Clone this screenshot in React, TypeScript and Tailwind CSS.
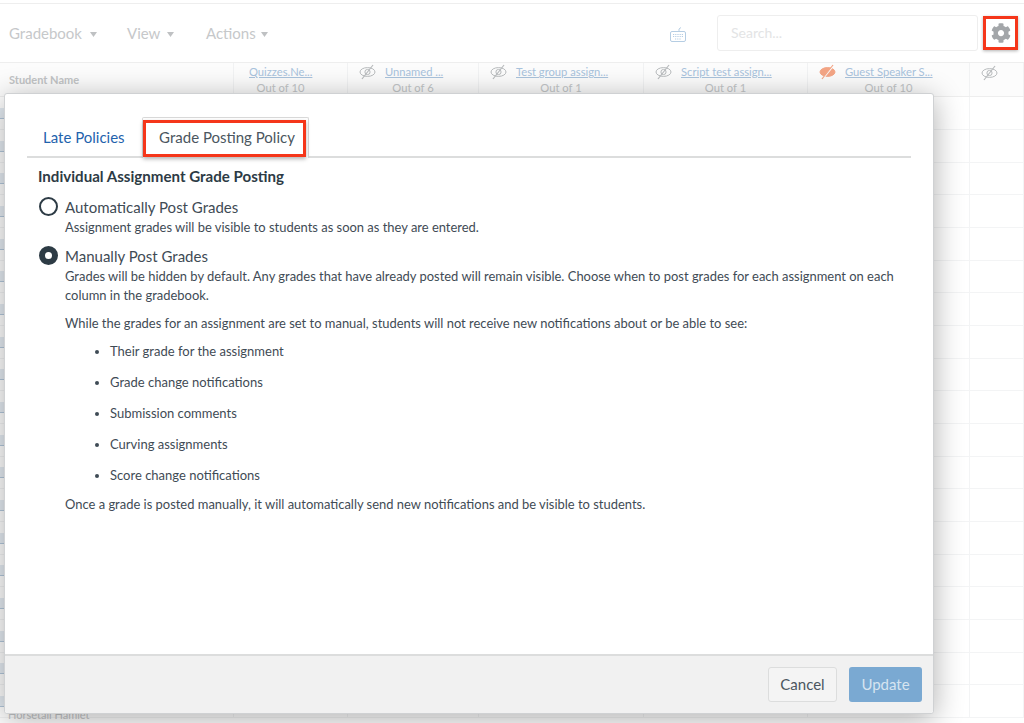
import { FaCog } from "react-icons/fa";

const cols = ["w-[234px]", "w-[114px]", "w-[131px]", "w-[165px]", "w-[164px]", "w-[162px]", "flex-1"];

function EyeOff({ color = "#9aa0a3", fill = false }: { color?: string; fill?: boolean }) {
  return (
    <svg width="17" height="16" viewBox="0 0 17 16" fill="none" className="shrink-0">
      <ellipse cx="8.5" cy="8" rx="7.5" ry="4.4" stroke={color} strokeWidth="1" fill={fill ? color : "none"} />
      {!fill && <circle cx="8.5" cy="8" r="2.6" stroke={color} strokeWidth="1" />}
      {fill && <path d="M4.5 14 L15 1" stroke="#fcfcfc" strokeWidth="1.4" />}
      <path d="M3 15 L14 1" stroke={color} strokeWidth="1.2" />
    </svg>
  );
}

function Caret() {
  return (
    <svg width="7" height="5" viewBox="0 0 7 5" className="mt-[2px]">
      <path d="M0 0 H7 L3.5 5 Z" fill="#bfc1c3" />
    </svg>
  );
}

function Head({ title, out, eye, w, orange, first }: { title?: string; out?: string; eye?: boolean; w: string; orange?: boolean; first?: boolean }) {
  return (
    <div className={`${w} h-full border-r border-[#f1f2f3] flex flex-col pt-[1px] text-[11.2px] leading-[16px]`}>
      <div className={`flex items-center gap-[9px] h-[18px] ${first ? "pl-[15px]" : "pl-[11px]"}`}>
        {eye && <EyeOff color={orange ? "#f4a585" : "#b8bbbd"} fill={orange} />}
        {title && <span className="text-[#a9c3dd] underline whitespace-nowrap">{title}</span>}
      </div>
      {out && <div className={`text-[#c3c6c8] text-center ${first ? "pr-[20px]" : ""}`}>{out}</div>}
    </div>
  );
}

function Row({ h }: { h: string }) {
  return (
    <div className={`${h} flex border-b border-[#f3f4f5]`}>
      {cols.map((c, i) => (
        <div key={i} className={`${c} border-r border-[#f3f4f5] flex items-center overflow-hidden`}>
          {i === 0 && <div className="w-[4px] h-[11px] bg-[#e6edf4] border-b border-[#b4c8dc]" />}
        </div>
      ))}
    </div>
  );
}

const rows = [
  "h-[33px]", "h-[33px]", "h-[32px]", "h-[33px]", "h-[33px]", "h-[32px]", "h-[33px]", "h-[33px]", "h-[32px]",
  "h-[33px]", "h-[33px]", "h-[32px]", "h-[33px]", "h-[33px]", "h-[32px]", "h-[33px]", "h-[33px]", "h-[32px]",
  "h-[33px]",
];

const items = [
  "Their grade for the assignment",
  "Grade change notifications",
  "Submission comments",
  "Curving assignments",
  "Score change notifications",
];

export default function App() {
  return (
    <div className="relative w-[1024px] h-[723px] overflow-hidden bg-white font-['Lato',sans-serif] text-[#2d3b45]">
      <div className="h-[4px] border-b border-[#eeeeee]" />
      <div className="h-[58px] flex items-center text-[15px] text-[#c6c8ca]">
        <div className="flex items-center gap-[8px] pl-[9px] w-[127px]">
          Gradebook <Caret />
        </div>
        <div className="flex items-center gap-[7px] w-[79px]">
          View <Caret />
        </div>
        <div className="flex items-center gap-[5px] w-[464px]">
          Actions <Caret />
        </div>
        <svg width="16" height="15" viewBox="0 0 16 15" fill="none" stroke="#b5cde3" strokeWidth="1" className="mr-[31px] mt-[2px]">
          <rect x="0.5" y="4.5" width="15" height="10" rx="1.5" />
          <path d="M9 4 V2 L11 0.5" />
          <path d="M3 7.5 H13 M3 9.5 H13 M5 12 H11" strokeDasharray="1.2 1" />
        </svg>
        <div className="w-[261px] h-[36px] border border-[#eeeeee] rounded-[3px] flex items-center pl-[13px] pb-[1px] text-[14px] text-[#e3e4e5]">
          Search...
        </div>
        <div className="ml-[5px] mb-[1px] w-[35px] h-[34px] border-[3px] border-[#f5361a] flex items-center justify-center shadow-[0_1px_3px_rgba(0,0,0,0.3)]">
          <FaCog size={20} color="#a3a6a9" />
        </div>
      </div>
      <div className="h-[35px] flex border-y border-[#eeeeee] bg-[#fcfcfc]">
        <div className="w-[234px] h-full border-r border-[#f1f2f3] pl-[9px] pt-[9px] text-[11px] font-bold text-[#c2c4c6]">Student Name</div>
        <Head w={cols[1]} title="Quizzes.Ne..." out="Out of 10" first />
        <Head w={cols[2]} title="Unnamed ..." out="Out of 6" eye />
        <Head w={cols[3]} title="Test group assign..." out="Out of 1" eye />
        <Head w={cols[4]} title="Script test assign..." out="Out of 1" eye />
        <Head w={cols[5]} title="Guest Speaker S..." out="Out of 10" eye orange />
        <Head w={cols[6]} eye />
      </div>
      {rows.map((h, i) => (
        <Row key={i} h={h} />
      ))}

      <div className="absolute left-[8px] top-[708px] text-[11px] leading-[14px] text-[#c4c6c8]">Horsetail Hamlet</div>

      <div className="absolute left-[4px] top-[93px] w-[930px] h-[621px] flex flex-col bg-white border border-[#cfd1d3] rounded-[3px] shadow-[0_5px_30px_rgba(0,0,0,0.32)]">
        <div className="flex-1 px-[22px] pt-[19px]">
          <div className="flex h-[45px] border-b-2 border-[#dcdddd] items-end">
            <div className="w-[115px] h-[40px] mb-[-1px] pl-[16px] flex items-center text-[15px] text-[#1f63ad]">Late Policies</div>
            <div className="relative w-[167px] h-[41px] mb-[-2px] border border-[#d9d9d9] border-b-0 rounded-t-[2px] bg-white flex items-center justify-center pl-[3px] pb-[2px] text-[15px] text-[#4b5660]">
              Grade Posting Policy
              <div className="absolute left-[0px] top-[2px] w-[163px] h-[37px] border-[3px] border-[#f5361a] shadow-[0_2px_4px_rgba(0,0,0,0.3)]" />
            </div>
          </div>
          <div className="pl-[11px] pt-[7px]">
            <h2 className="text-[15.1px] font-bold leading-[22px] text-[#2d3b45]">Individual Assignment Grade Posting</h2>
            <div className="flex mt-[9px]">
              <div className="w-[19px] h-[19px] ml-[1px] rounded-full border-[2px] border-[#2d3b45] mt-[1px] shrink-0" />
              <div className="ml-[7px]">
                <div className="text-[15px] leading-[22px] text-[#3f4b55]">Automatically Post Grades</div>
                <div className="text-[12.94px] leading-[18px] text-[#3f4b55]">Assignment grades will be visible to students as soon as they are entered.</div>
              </div>
            </div>
            <div className="flex mt-[9px]">
              <div className="w-[19px] h-[19px] ml-[1px] rounded-full border-[6px] border-[#2d3b45] mt-[1px] shrink-0" />
              <div className="ml-[7px] text-[12.94px] leading-[19px] text-[#3f4b55]">
                <div className="text-[15px] leading-[22px]">Manually Post Grades</div>
                <p>
                  Grades will be hidden by default. Any grades that have already posted will remain visible. Choose when to post grades for each assignment on each
                  <br />
                  column in the gradebook.
                </p>
                <p className="mt-[9px]">While the grades for an assignment are set to manual, students will not receive new notifications about or be able to see:</p>
                <ul className="mt-[9px] flex flex-col gap-[12px] list-disc pl-[45px] text-[13px]">
                  {items.map((t) => (
                    <li key={t}>{t}</li>
                  ))}
                </ul>
                <p className="mt-[10px]">Once a grade is posted manually, it will automatically send new notifications and be visible to students.</p>
              </div>
            </div>
          </div>
        </div>
        <div className="h-[59px] bg-[#f1f1f1] border-t-2 border-[#dcdddd] flex items-center justify-end gap-[12px] pr-[11px] pb-[1px] rounded-b-[3px]">
          <div className="w-[69px] h-[35px] border border-[#dcdddd] rounded-[3px] bg-[#f4f4f4] flex items-center justify-center text-[15px] text-[#4b5660]">Cancel</div>
          <div className="w-[73px] h-[35px] rounded-[3px] bg-[#7aa9d2] flex items-center justify-center text-[15px] text-[#d6e4f0]">Update</div>
        </div>
      </div>
    </div>
  );
}
